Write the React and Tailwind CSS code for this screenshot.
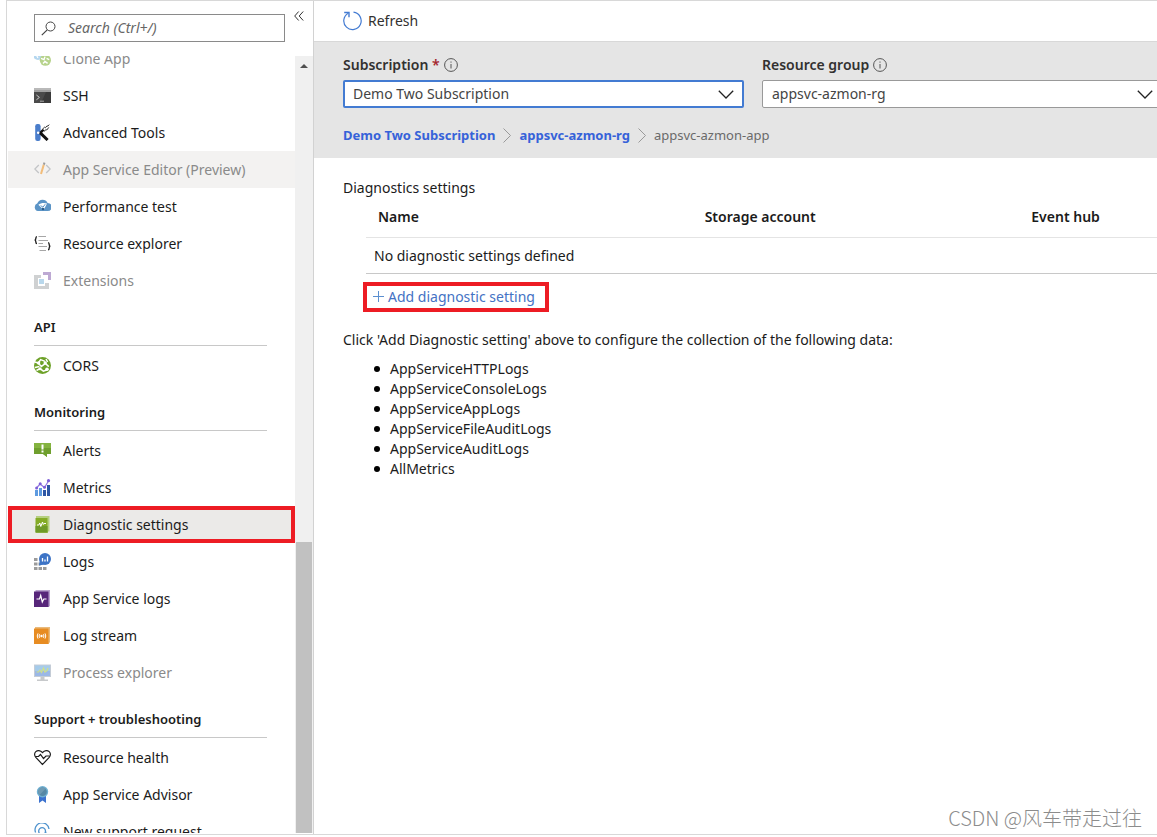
import { useState } from "react";

/* ---------- Sidebar icons (17px grid) ---------- */

function Icon({ children, className = "" }) {
  return (
    <svg
      viewBox="0 0 17 17"
      className={`size-[17px] shrink-0 ${className}`}
      fill="none"
      aria-hidden="true"
    >
      {children}
    </svg>
  );
}

const icons = {
  clone: (
    <Icon>
      <circle cx="4" cy="5" r="5" fill="#b5d7ef" />
      <path d="M1 2.5 4 8M5 1l2 4" stroke="#fff" strokeWidth="1.2" />
      <circle cx="11.4" cy="10.2" r="5.6" fill="#b7d38c" />
      <path
        d="m7 8.4 3 1.2 1-3M9 13.4l2-2 2.6 2M12.6 8.4l2.6 1.2"
        stroke="#fff"
        strokeWidth="1.4"
      />
    </Icon>
  ),
  ssh: (
    <Icon>
      <path fill="#4a4a4a" d="M0 1h17v15H0z" />
      <path fill="#3a3a3a" d="M12 5h5v11H7z" />
      <path fill="#a0a0a0" d="M0 1h17v4H0z" />
      <path fill="#b9b9b9" d="M0 1h17v2H0z" />
      <path d="m2.4 8 3 2.4-3 2.4" stroke="#c8c8c8" />
      <path d="M6 14.2h4" stroke="#a8a8a8" />
    </Icon>
  ),
  tools: (
    <Icon>
      <rect x="1.2" y="0" width="5.4" height="17" rx="2.2" fill="#4a7dcb" />
      <path d="m6 8.6 7.6 7.4" stroke="#111" strokeWidth="3" />
      <path d="M6 9.2 9.6 5.6" stroke="#111" strokeWidth="2.4" />
      <path d="m8.4 5.2 2.2-2 .8.6 1.6-2 .8.4L15.2.6M10 7.4l2-1.8.8.4 2-2.6" stroke="#333" />
      <circle cx="4.2" cy="8.8" r="1.3" fill="#fff" />
    </Icon>
  ),
  editor: (
    <Icon>
      <path d="M4.8 4 .8 8l4 4M12.2 4l4 4-4 4" stroke="#c2c4c6" strokeWidth="1.3" />
      <path d="M9.8 3.6 7 13" stroke="#f2bd7a" strokeWidth="2" />
      <path d="m10.5 1.6-.6 2" stroke="#9a9a9a" strokeWidth="2" />
    </Icon>
  ),
  performance: (
    <Icon>
      <path
        d="M4 13a4 4 0 0 1-.6-7.7A5.600 5.600 0 0 1 13.600 5 4 4 0 0 1 13.600 13z"
        fill="#5b94c6"
      />
      <path d="M4.400 6.800c2.400-2 6-2.400 8.600-1.200l-1.600 3.200-1.200 2-1 .8-2-2z" fill="#fff" />
      <path d="m6.600 7.600 2.400 1.600 2.200-3" stroke="#5b94c6" />
      <circle cx="9" cy="11" r="1.200" fill="#2b5a86" />
    </Icon>
  ),
  explorer: (
    <Icon>
      <path
        d="M3 1.600c-1.200 0-1.200.8-1.200 1.800s0 1.600-1.200 1.600c1.200 0 1.200.8 1.200 1.800s0 1.800 1.200 1.800"
        stroke="#222"
        strokeWidth="1.4"
      />
      <path
        d="M14 7.600c1.200 0 1.200.8 1.200 1.800s0 1.800 1.200 1.800c-1.200 0-1.200.8-1.200 1.800s0 1.800-1.200 1.800"
        stroke="#222"
        strokeWidth="1.4"
      />
      <path
        d="M4.500 1.500H12M4.500 5.500H14M4.500 8.500H9M4.500 11.500H13M5.500 15.500H12"
        stroke="#a6a6a6"
        strokeWidth="1.2"
      />
    </Icon>
  ),
  extensions: (
    <Icon>
      <path fill="#cfd1d2" d="M0 3h7v3H4v8h7v-3h4v6H0z" />
      <path fill="#bda9d3" d="M9 0h8v8h-3V3H9z" />
      <path fill="#b9d8ec" d="M5 7h5v5H5z" />
    </Icon>
  ),
  cors: (
    <Icon>
      <circle cx="8.5" cy="8.5" r="8.5" fill="#6da128" />
      <path d="M0 4.6 4.4 6 6.6 2.6 11 4.4M1 10.5l4.4-1" stroke="#fff" strokeWidth="1.5" />
      <path d="m4.6 6.4 2.8 3 4-3 3.4 3.2" stroke="#fff" strokeWidth="1.5" />
      <path d="M2.5 13.5 6 11.6l3.4 2.6 4-1.4M12 2l1.6 3" stroke="#fff" strokeWidth="1.5" />
      <circle cx="4.6" cy="6" r="1.7" fill="#fff" />
      <circle cx="11.2" cy="6" r="1.7" fill="#fff" />
      <circle cx="6" cy="11.8" r="1.5" fill="#fff" />
      <circle cx="13" cy="12.2" r="1.8" fill="#fff" />
    </Icon>
  ),
  alerts: (
    <Icon>
      <path fill="#84b340" d="M0 1h17v11h-4v3l-4-3H0z" />
      <path fill="#6f9f2e" d="M0 6h17v6h-4v3l-4-3H0z" />
      <path fill="#fff" d="M7.500 2.500h2v5h-2zM7.500 8.500h2v2h-2z" />
    </Icon>
  ),
  metrics: (
    <Icon>
      <path fill="#5e9be0" d="M1 11h3v6H1zM5 9h3v8H5z" />
      <path fill="#2d56a5" d="M9 11h3v6H9zM13 6h3v11h-3z" />
      <path d="m2.500 9 3.500-4 4.500 3.500L14.500 2" stroke="#9277e0" strokeWidth="1.2" />
      <circle cx="2.6" cy="9" r="1.5" fill="#7e5fd8" />
      <circle cx="6.2" cy="4.8" r="1.5" fill="#7e5fd8" />
      <circle cx="10.5" cy="8.3" r="1.5" fill="#7e5fd8" />
      <circle cx="14.5" cy="1.7" r="1.6" fill="#7e5fd8" />
    </Icon>
  ),
  diagnostic: (
    <Icon>
      <path fill="#b5cf7f" d="M2 0h13.500v15.500H14V17H2z" />
      <path fill="#84ab26" d="M1.500 2h12v14.500h-12z" />
      <path fill="#6f9a28" d="M1.500 10h12v6.500h-12z" />
      <path d="M3 9h1.800l1-2 1 3.500L8.500 6l.8 2.500L10 7.500h2" stroke="#fff" />
    </Icon>
  ),
  logs: (
    <Icon>
      <path
        fill="#9b9b9b"
        d="M0 5h3.500v3H0zM0 9.500h3.500v3H0zM0 14h3.500v3H0zM4.500 14H8v3H4.500zM9 14h3.500v3H9zM4.500 9.500h2v3h-2z"
      />
      <circle cx="11" cy="6" r="6" fill="#3d74c6" />
      <path d="m6 7-1 5.500 5-1z" fill="#3d74c6" />
      <path d="M8.500 5v3.500M11 6.500v2M13.500 3.500v5" stroke="#fff" strokeWidth="1.3" />
    </Icon>
  ),
  appLogs: (
    <Icon>
      <path fill="#b9a3cd" d="M1.500 0H16v15.500l-1 1.500H1z" />
      <path fill="#57267a" d="M0 1.500h14.500V17H0z" />
      <path d="M2.500 9h3l1.200-3.500L8.300 12l1.500-3h2.700" stroke="#fff" strokeWidth="1.2" />
    </Icon>
  ),
  stream: (
    <Icon>
      <path fill="#e9ba7c" d="M1 0h15v15l-1.500 2H1z" />
      <path fill="#e78c22" d="M0 1.500h14.500V17H0z" />
      <circle cx="7.5" cy="9" r="1.2" fill="#fff" />
      <path
        d="M5.700 7.200a3 3 0 0 0 0 3.600M4 6.400a5 5 0 0 0 0 5.200M9.300 7.200a3 3 0 0 1 0 3.600M11 6.400a5 5 0 0 1 0 5.200"
        stroke="#fff"
      />
    </Icon>
  ),
  process: (
    <Icon>
      <path fill="#c4ccd6" d="M0 .5h17v12.500H0z" />
      <path fill="#a5cbea" d="M1 1.500h15v10.500H1z" />
      <path fill="#9bb8e6" d="M1 7h15v5H1z" />
      <path d="M2.500 8h2L6 6l1.500 2.500L9.500 4l1.500 4 2-1.500L14 4" stroke="#cfe08a" strokeWidth="1.2" />
      <path fill="#c7c9cb" d="M6.500 13h4v2.500H14V17H3v-1.500h3.500z" />
    </Icon>
  ),
  health: (
    <Icon>
      <path
        d="M8.500 15.500 1.800 8.400C.2 6.600.2 4 1.800 2.600s4.600-1.600 6.700 1c2.100-2.600 5.100-2.400 6.700-1s1.600 4 0 5.800z"
        stroke="#1b1b1b"
        strokeWidth="1.2"
      />
      <path d="M1.500 7.500h3L6.500 5.500l3 4 2.500-2.500h3.500" stroke="#1b1b1b" strokeWidth="1.2" />
    </Icon>
  ),
  advisor: (
    <Icon>
      <path fill="#3c72cf" d="M5 10h7v7l-3.500-2.500L5 17z" />
      <circle cx="8.5" cy="5.8" r="5.7" fill="#6fb0d2" />
      <circle cx="8.5" cy="5.8" r="4.3" fill="#5688a5" />
      <path d="M5.500 8.900A4.300 4.300 0 0 1 11.500 2.700z" fill="#6e9ab3" />
    </Icon>
  ),
  support: (
    <Icon>
      <path d="M1.600 9.500a7 7 0 1 1 13.400-3.500" stroke="#4f93ce" strokeWidth="1.300" />
      <path
        d="M11.500 8a3.400 3.400 0 1 1-3.400-3.400A3.400 3.400 0 0 1 11.500 8c0 2.500 1 3.500 3.500 3.500h1"
        stroke="#4f93ce"
        strokeWidth="1.3"
      />
      <path d="M2.500 11.500c1 2.200 3 3.500 6 3.500" stroke="#4f93ce" strokeWidth="1.2" />
    </Icon>
  ),
};

const menu = [
  {
    items: [
      { label: "Clone App", icon: "clone", disabled: true },
      { label: "SSH", icon: "ssh" },
      { label: "Advanced Tools", icon: "tools" },
      { label: "App Service Editor (Preview)", icon: "editor", disabled: true, hovered: true },
      { label: "Performance test", icon: "performance" },
      { label: "Resource explorer", icon: "explorer" },
      { label: "Extensions", icon: "extensions", disabled: true },
    ],
  },
  {
    title: "API",
    items: [{ label: "CORS", icon: "cors" }],
  },
  {
    title: "Monitoring",
    items: [
      { label: "Alerts", icon: "alerts" },
      { label: "Metrics", icon: "metrics" },
      { label: "Diagnostic settings", icon: "diagnostic" },
      { label: "Logs", icon: "logs" },
      { label: "App Service logs", icon: "appLogs" },
      { label: "Log stream", icon: "stream" },
      { label: "Process explorer", icon: "process", disabled: true },
    ],
  },
  {
    title: "Support + troubleshooting",
    items: [
      { label: "Resource health", icon: "health" },
      { label: "App Service Advisor", icon: "advisor" },
      { label: "New support request", icon: "support" },
    ],
  },
];

const logTypes = [
  "AppServiceHTTPLogs",
  "AppServiceConsoleLogs",
  "AppServiceAppLogs",
  "AppServiceFileAuditLogs",
  "AppServiceAuditLogs",
  "AllMetrics",
];

function MenuItem({ item, active, onSelect }) {
  return (
    <li>
      <a
        href="#"
        aria-current={active ? "page" : undefined}
        aria-disabled={item.disabled || undefined}
        onClick={(e) => {
          e.preventDefault();
          if (!item.disabled) onSelect(item.label);
        }}
        className={`flex h-[37px] items-center gap-3 ${
          active ? "border-4 border-[#ed1c24] bg-[#ebeae8] pl-[22px]" : "pl-[26px]"
        } ${item.hovered ? "bg-[#f3f2f1]" : ""} ${
          item.disabled ? "text-[#8a8a8a]" : "text-[#1b1b1b]"
        }`}
      >
        {icons[item.icon]}
        <span className="whitespace-nowrap">{item.label}</span>
      </a>
    </li>
  );
}

function Sidebar() {
  const [selected, setSelected] = useState("Diagnostic settings");

  return (
    <aside className="flex w-[307px] shrink-0 flex-col border-r border-[#d2d2d2] pb-px pl-px">
      <div className="flex h-[55px] shrink-0 items-start justify-between pl-[26px] pr-[9px]">
        <label className="mt-[13px] flex h-7 w-[251px] items-center gap-3 border border-[#8a8a8a] px-1.5">
          <svg viewBox="0 0 15 15" className="size-[15px] shrink-0" fill="none" aria-hidden="true">
            <circle cx="9.5" cy="5.5" r="4.5" stroke="#444" />
            <path d="M6.200 8.800.8 14.200" stroke="#444" strokeWidth="1.2" />
          </svg>
          <input
            type="text"
            aria-label="Search"
            placeholder="Search (Ctrl+/)"
            className="min-w-0 flex-1 italic outline-none placeholder:text-[#666]"
          />
        </label>
        <button type="button" aria-label="Collapse menu" className="mt-2.5">
          <svg viewBox="0 0 10 10" className="size-2.5" fill="none" stroke="#333" aria-hidden="true">
            <path d="M4.700.5.700 5l4 4.500M9.200.5l-4 4.500 4 4.500" />
          </svg>
        </button>
      </div>

      <div className="flex min-h-0 flex-1">
        <nav className="min-w-0 flex-1 overflow-hidden">
          <div className="-mt-4">
            {menu.map((group, i) => (
              <section key={i}>
                {group.title && (
                  <h2 className="ml-[26px] mr-7 mb-px border-b border-[#c8c8c8] pt-[18px] pb-2 text-[13px] leading-5 font-semibold">
                    {group.title}
                  </h2>
                )}
                <ul>
                  {group.items.map((item) => (
                    <MenuItem
                      key={item.label}
                      item={item}
                      active={item.label === selected}
                      onSelect={setSelected}
                    />
                  ))}
                </ul>
              </section>
            ))}
          </div>
        </nav>

        {/* Scrollbar */}
        <div className="flex w-[18px] flex-col bg-[#f0f0f0]" aria-hidden="true">
          <svg viewBox="0 0 8 4" className="mx-auto mt-2 h-1 w-2" fill="#505050">
            <path d="M0 4 4 0l4 4z" />
          </svg>
          <div className="mx-px mt-auto h-3/8 bg-[#c1c1c1]" />
        </div>
      </div>
    </aside>
  );
}

function InfoIcon() {
  return (
    <svg viewBox="0 0 14 14" className="size-3.5 shrink-0" fill="none" aria-hidden="true">
      <circle cx="7" cy="7" r="6.4" stroke="#555" />
      <path d="M7 6v4.500M7 3.500v1.200" stroke="#555" />
    </svg>
  );
}

function SelectField({ id, label, required, options, focused }) {
  return (
    <div>
      <div className="flex h-5 items-center gap-1 text-[#323130]">
        <label htmlFor={id} className="font-semibold">
          {label}
          {required && <span className="text-[#a4262c]"> *</span>}
        </label>
        <InfoIcon />
      </div>
      <div className="relative mt-[5px]">
        <select
          id={id}
          className={`block h-7 w-full appearance-none rounded-xs bg-white text-[#444] outline-none ${
            focused ? "border-2 border-[#437bd2] px-2" : "border border-[#999] px-[9px]"
          }`}
        >
          {options.map((o) => (
            <option key={o}>{o}</option>
          ))}
        </select>
        <svg
          viewBox="0 0 16 9"
          className="pointer-events-none absolute top-2.5 right-2.5 h-[9px] w-4"
          fill="none"
          stroke="#222"
          strokeWidth="1.3"
          aria-hidden="true"
        >
          <path d="m.8.800 7.200 7.200 7.200-7.200" />
        </svg>
      </div>
    </div>
  );
}

function CrumbArrow() {
  return (
    <svg viewBox="0 0 8 15" className="h-[15px] w-2" fill="none" stroke="#999" aria-hidden="true">
      <path d="m.5.500 7 7-7 7" />
    </svg>
  );
}

export default function App() {
  return (
    <div className="h-screen overflow-hidden bg-white pb-0.5 pl-1.5 font-['Noto_Sans','Open_Sans',sans-serif] text-[14px] leading-5 text-[#1b1b1b]">
      <div className="relative flex h-full border-t border-b border-l border-[#d8d8d8]">
        <Sidebar />

        <main className="min-w-0 flex-1 overflow-hidden">
          {/* Command bar */}
          <div className="flex h-[41px] items-center border-b border-[#d8d8d8] pl-7">
            <button type="button" className="flex items-center gap-1.5 text-[#323130]">
              <svg viewBox="0 0 20 20" className="size-5" fill="none" stroke="#437bd2" aria-hidden="true">
                <path d="M11.500 1.200a8.700 8.700 0 1 1-5.200 1" strokeWidth="1.2" />
                <path d="M2.200 1.500h4.800v4.800" strokeWidth="1.4" />
              </svg>
              Refresh
            </button>
          </div>

          {/* Scope picker */}
          <div className="bg-[#e5e5e5] pt-[13px] pb-[13px] pl-[29px]">
            <div className="-mr-1.5 grid grid-cols-2 gap-[18px]">
              <SelectField
                id="subscription"
                label="Subscription"
                required
                focused
                options={["Demo Two Subscription"]}
              />
              <SelectField id="resource-group" label="Resource group" options={["appsvc-azmon-rg"]} />
            </div>
            <nav aria-label="Breadcrumb" className="mt-[17px] flex h-5 items-center gap-2 text-[13px]">
              <a href="#" className="font-bold text-[#3662d9]">
                Demo Two Subscription
              </a>
              <CrumbArrow />
              <a href="#" className="font-bold text-[#3662d9]">
                appsvc-azmon-rg
              </a>
              <CrumbArrow />
              <span className="text-[#6a6a6a]">appsvc-azmon-app</span>
            </nav>
          </div>

          {/* Diagnostic settings */}
          <div className="pt-5 pl-[29px]">
            <h1>Diagnostics settings</h1>
            <div className="ml-[23px] overflow-hidden">
              <table className="w-full min-w-[980px] table-fixed text-left">
                <thead>
                  <tr className="h-[39px] border-b border-[#e4e4e4]">
                    <th className="pl-3 font-semibold">Name</th>
                    <th className="pl-3 font-semibold">Storage account</th>
                    <th className="pl-3 font-semibold">Event hub</th>
                  </tr>
                </thead>
                <tbody>
                  <tr className="h-9 border-b border-[#c8c8c8]">
                    <td colSpan={3} className="pt-0.5 pl-2">
                      No diagnostic settings defined
                    </td>
                  </tr>
                </tbody>
              </table>
            </div>

            <button
              type="button"
              className="mt-2 ml-5 flex h-[30px] items-center gap-1 border-4 border-[#ed1c24] pr-2.5 pl-1.5 text-[#4472c4]"
            >
              <svg viewBox="0 0 11 11" className="size-[11px]" stroke="#5b8fd0" aria-hidden="true">
                <path d="M5.500 0v11M0 5.500h11" />
              </svg>
              Add diagnostic setting
            </button>

            <p className="mt-[18px]">
              Click 'Add Diagnostic setting' above to configure the collection of the following data:
            </p>
            <ul className="mt-[9px] pl-[31px]">
              {logTypes.map((type) => (
                <li key={type} className="flex items-center gap-2.5">
                  <span className="size-1.5 rounded-full bg-black" />
                  {type}
                </li>
              ))}
            </ul>
          </div>
        </main>

        <p className="absolute right-[15px] bottom-1 font-['Noto_Sans_CJK_SC',sans-serif] text-[20px] leading-6 font-light text-[#8c8c8c]">
          CSDN @风车带走过往
        </p>
      </div>
    </div>
  );
}
